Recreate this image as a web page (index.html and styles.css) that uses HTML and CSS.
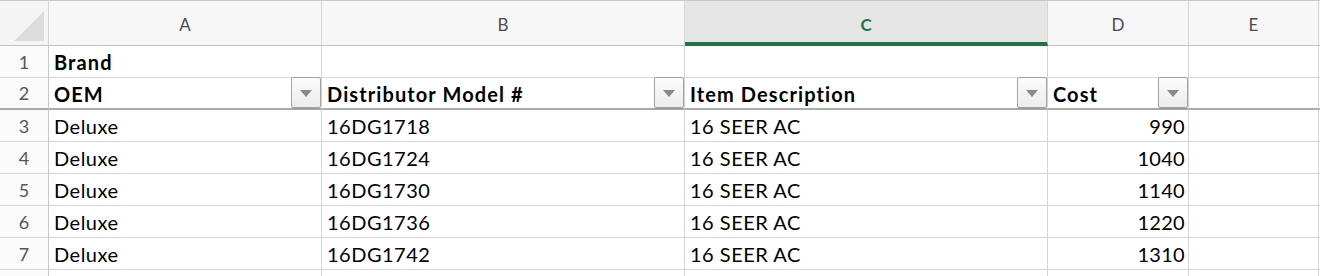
FILE: index.html
```html
<!DOCTYPE html>
<html lang="en">
<head>
    <meta charset="UTF-8">
    <meta name="viewport" content="width=device-width, initial-scale=1.0">
    <title>Price List</title>
    <link rel="stylesheet" href="styles.css">
</head>
<body>
    <div class="sheet">
        <!-- column headers -->
        <div class="col-head corner">
            <svg class="corner-mark" width="30" height="30" viewBox="0 0 30 30"><polygon points="0,30 30,0 30,30" fill="#dcdcdc"/></svg>
        </div>
        <div class="col-head">A</div>
        <div class="col-head">B</div>
        <div class="col-head active">C</div>
        <div class="col-head">D</div>
        <div class="col-head">E</div>
        <div class="col-head filler"></div>

        <!-- row 1 -->
        <div class="row-head">1</div>
        <div class="cell bold">Brand</div>
        <div class="cell"></div>
        <div class="cell"></div>
        <div class="cell"></div>
        <div class="cell"></div>
        <div class="cell filler"></div>

        <!-- row 2: table headers with filter buttons -->
        <div class="row-head header-row">2</div>
        <div class="cell bold header-row"><span>OEM</span><span class="filter-btn"></span></div>
        <div class="cell bold header-row"><span>Distributor Model #</span><span class="filter-btn"></span></div>
        <div class="cell bold header-row"><span>Item Description</span><span class="filter-btn"></span></div>
        <div class="cell bold header-row"><span>Cost</span><span class="filter-btn"></span></div>
        <div class="cell header-row"></div>
        <div class="cell filler header-row"></div>

        <div class="row-head">3</div>
        <div class="cell">Deluxe</div>
        <div class="cell">16DG1718</div>
        <div class="cell">16 SEER AC</div>
        <div class="cell num">990</div>
        <div class="cell"></div>
        <div class="cell filler"></div>

        <div class="row-head">4</div>
        <div class="cell">Deluxe</div>
        <div class="cell">16DG1724</div>
        <div class="cell">16 SEER AC</div>
        <div class="cell num">1040</div>
        <div class="cell"></div>
        <div class="cell filler"></div>

        <div class="row-head">5</div>
        <div class="cell">Deluxe</div>
        <div class="cell">16DG1730</div>
        <div class="cell">16 SEER AC</div>
        <div class="cell num">1140</div>
        <div class="cell"></div>
        <div class="cell filler"></div>

        <div class="row-head">6</div>
        <div class="cell">Deluxe</div>
        <div class="cell">16DG1736</div>
        <div class="cell">16 SEER AC</div>
        <div class="cell num">1220</div>
        <div class="cell"></div>
        <div class="cell filler"></div>

        <div class="row-head">7</div>
        <div class="cell">Deluxe</div>
        <div class="cell">16DG1742</div>
        <div class="cell">16 SEER AC</div>
        <div class="cell num">1310</div>
        <div class="cell"></div>
        <div class="cell filler"></div>

        <!-- row 8, only its top edge shows -->
        <div class="row-head"></div>
        <div class="cell"></div>
        <div class="cell"></div>
        <div class="cell"></div>
        <div class="cell"></div>
        <div class="cell"></div>
        <div class="cell filler"></div>
    </div>
</body>
</html>
```

FILE: styles.css
```css
body {
    margin: 0;
    background-color: #ffffff;
    font-family: Lato, "Liberation Sans", sans-serif;
    overflow: hidden;
}

.sheet {
    display: grid;
    grid-template-columns: 49px 273px 363px 363px 141px 130px 1px;
    grid-template-rows: 45px repeat(7, 32px) 32px;
    border-top: 1px solid #c8c8c8;
    width: 1320px;
}

.col-head {
    box-sizing: border-box;
    background-color: #f7f7f7;
    border-right: 1px solid #d6d6d6;
    border-bottom: 1px solid #c2c2c2;
    color: #4c4c4c;
    font-size: 17px;
    display: flex;
    align-items: center;
    justify-content: center;
    padding-top: 2px;
}

.col-head.active {
    background-color: #e6e6e6;
    border-bottom: 4px solid #217346;
    color: #217346;
    font-weight: bold;
    padding-top: 5px;
}

.col-head.corner {
    position: relative;
    background-color: #f4f4f4;
}

.corner-mark {
    position: absolute;
    left: 14px;
    top: 10px;
}

.filler {
    border-right: none;
}

.row-head {
    box-sizing: border-box;
    background-color: #fafafa;
    border-right: 1px solid #c8c8c8;
    border-bottom: 1px solid #d6d6d6;
    color: #555555;
    font-size: 18px;
    display: flex;
    align-items: center;
    justify-content: center;
    padding-top: 1px;
}

.cell {
    box-sizing: border-box;
    border-right: 1px solid #d6d6d6;
    border-bottom: 1px solid #d6d6d6;
    color: #000000;
    font-size: 20px;
    letter-spacing: 0.5px;
    padding: 1px 0 0 5px;
    display: flex;
    align-items: center;
    justify-content: space-between;
    white-space: nowrap;
}

.cell.bold {
    font-weight: bold;
    letter-spacing: 1.1px;
}

.cell.num {
    justify-content: flex-end;
    padding: 1px 3px 0 0;
    letter-spacing: 0.3px;
}

.header-row {
    border-bottom: 2px solid #ababab;
    align-items: stretch;
    padding-top: 0;
}

.cell.header-row span:first-child {
    display: flex;
    align-items: center;
    padding-top: 1px;
}

.row-head.header-row {
    align-items: center;
}

.filter-btn {
    box-sizing: border-box;
    width: 30px;
    height: 31px;
    margin-top: -1px;
    border: 1px solid #a3a3a3;
    border-radius: 2px;
    background: linear-gradient(#fbfbfb, #ececec);
    box-shadow: 0 1px 1px rgba(0, 0, 0, 0.12);
    display: flex;
    align-items: center;
    justify-content: center;
}

.filter-btn::after {
    content: "";
    width: 0;
    height: 0;
    border-left: 6px solid transparent;
    border-right: 6px solid transparent;
    border-top: 7px solid #8a8a8a;
    margin-top: 1px;
}
```
